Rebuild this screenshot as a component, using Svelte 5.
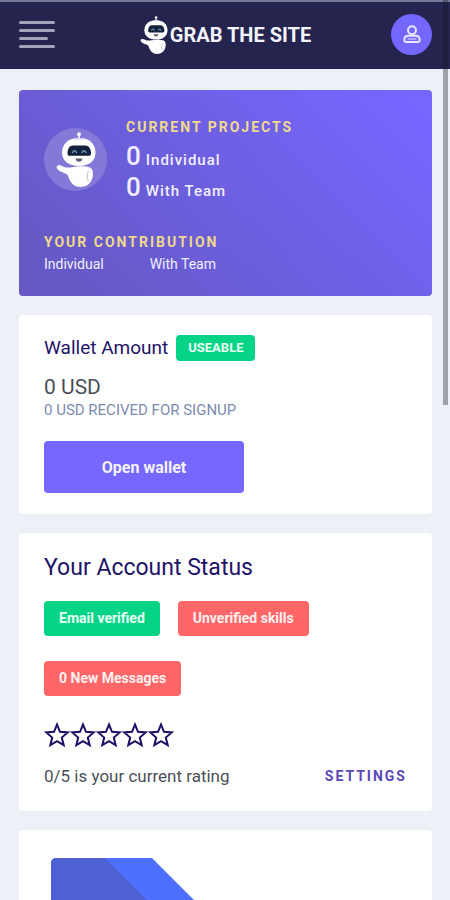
<script lang="ts">
  const projects = [
    { count: 0, label: 'Individual' },
    { count: 0, label: 'With Team' },
  ];

  const contributions = ['Individual', 'With Team'];

  const statuses = [
    { text: 'Email verified', ok: true },
    { text: 'Unverified skills', ok: false },
    { text: '0 New Messages', ok: false },
  ];

  const maxRating = 5;
  let rating = $state(0);
</script>

<svelte:head>
  <title>Grab The Site</title>
</svelte:head>

{#snippet robot()}
  <svg class="robot" viewBox="0 0 40 55" aria-hidden="true">
    <path d="M23 2v7" stroke="#fff" stroke-width="1.6" />
    <circle cx="23" cy="2.2" r="1.9" fill="#fff" />
    <path d="M23 6c10.500 0 16.500 6 16.500 14.500S33 34 23 34 6 29 6 20.500 12.500 6 23 6z" fill="#fff" />
    <path d="M18 8h10l-1.500-2h-7z" fill="#dcdcf2" />
    <path d="M17 13.500h12c4 0 6 3.500 6 8 0 1.600-.8 2.300-2.200 2.300H13.600c-1.400 0-2.100-.7-2.100-2.300 0-4.500 1.900-8 5.500-8z" fill="#15203a" />
    <path d="M16.500 20.500q2-3.500 4 0M26 20.500q2-3.500 4 0" fill="none" stroke="#6f9aba" stroke-width="1.500" stroke-linecap="round" />
    <path d="M19.500 26.500h7q-.8 3.200-3.500 3.200t-3.500-3.200z" fill="#595b68" />
    <path d="M1 34c1.500-1.500 4-.6 6 .4 3 1.500 6 1.300 9 .8 6-1.200 14-1.200 18 .4 3 1.500 3.400 5.400 2.600 9.400C35.400 51 31 55 24.500 55S14.500 51 12.500 45c-.5-2-1.500-2.800-3.500-3.600C5.500 40-1 37.500 1 34z" fill="#fff" />
    <path d="M32.500 39c-1.800 2.500-1.800 8 0 10.500" fill="none" stroke="#c9c9d6" stroke-width="1.200" />
  </svg>
{/snippet}

<div class="page">
  <header class="topbar">
    <button class="menu" aria-label="Open menu">
      <span></span>
      <span></span>
      <span class="short"></span>
      <span></span>
    </button>
    <a class="brand" href="/">
      {@render robot()}
      <span>GRAB THE SITE</span>
    </a>
    <a class="avatar" href="/profile" aria-label="Profile">
      <svg viewBox="0 0 20 20" width="20" height="20" fill="none" stroke="currentColor" stroke-width="2">
        <circle cx="10" cy="5.200" r="4" />
        <path d="M6.500 10.800h7c2.600 0 4.200 1.600 4.200 3.900 0 1.300-.8 2.200-2.200 2.200h-11c-1.400 0-2.200-.9-2.200-2.200 0-2.300 1.600-3.900 4.200-3.900z" />
        <path d="M5.500 14h9" stroke-width="1" />
      </svg>
    </a>
  </header>

  <main class="content">
    <section class="card card--projects">
      <div class="projects">
        <div class="bot">{@render robot()}</div>
        <div>
          <h2 class="eyebrow">CURRENT PROJECTS</h2>
          <ul class="counts">
            {#each projects as project}
              <li><strong>{project.count}</strong> {project.label}</li>
            {/each}
          </ul>
        </div>
      </div>
      <h2 class="eyebrow">YOUR CONTRIBUTION</h2>
      <div class="contributions">
        {#each contributions as item}
          <span>{item}</span>
        {/each}
      </div>
    </section>

    <section class="card card--wallet">
      <div class="wallet-head">
        <h2 class="wallet-title">Wallet Amount</h2>
        <span class="badge">USEABLE</span>
      </div>
      <p class="amount">0 USD</p>
      <p class="note">0 USD RECIVED FOR SIGNUP</p>
      <button class="btn">Open wallet</button>
    </section>

    <section class="card card--status">
      <h2 class="status-title">Your Account Status</h2>
      <div class="pills">
        {#each statuses as status}
          <span class="pill" class:pill--ok={status.ok}>{status.text}</span>
        {/each}
      </div>
      <div class="stars" role="img" aria-label="{rating} of {maxRating} stars">
        {#each { length: maxRating } as _, i}
          <svg viewBox="0 0 26 26" class:filled={i < rating}>
            <path d="M13 2.500l3 7.300 7.800.6-6 5.100 1.900 7.700L13 19.100l-6.700 4.100 1.900-7.700-6-5.100 7.800-.6z" />
          </svg>
        {/each}
      </div>
      <div class="status-foot">
        <span>{rating}/{maxRating} is your current rating</span>
        <a href="/settings">SETTINGS</a>
      </div>
    </section>

    <section class="card card--promo">
      <svg viewBox="0 0 220 140" width="220" height="140" aria-hidden="true">
        <path d="M5 0h96l119 119v21H0V5a5 5 0 0 1 5-5z" fill="#4d70ff" />
        <path d="M5 0h49l140 140H0V5a5 5 0 0 1 5-5z" fill="#4e61d3" />
      </svg>
    </section>
  </main>

  <div class="scroll-thumb"></div>
</div>

<style>
  :global(body) {
    background: #edf1f7;
  }

  .page {
    position: relative;
    height: 100vh;
    overflow: hidden;
    font-family: Roboto, "Liberation Sans", sans-serif;
    background: #edf1f7;
    color: #4b4f58;
  }

  h2, p, ul {
    margin: 0;
    padding: 0;
    font-weight: 400;
  }

  a { text-decoration: none; }

  button {
    border: none;
    font-family: inherit;
    cursor: pointer;
  }

  /* top bar */
  .topbar {
    display: grid;
    grid-template-columns: 1fr auto 1fr;
    align-items: center;
    height: 65px;
    padding: 0 18px 2px 19px;
    border-top: 2px solid #737b98;
    background: #24244f;
  }

  .menu {
    display: flex;
    flex-direction: column;
    gap: 5px;
    width: 36px;
    padding: 0;
    background: none;
  }

  .menu span {
    height: 3px;
    border-radius: 2px;
    background: #a2a2bb;
  }

  .menu .short { width: 29px; }

  .brand {
    display: flex;
    align-items: center;
    gap: 2px;
    font-size: 20px;
    font-weight: 700;
    color: #f3f3fb;
  }

  .brand .robot { width: 28px; height: 38px; }

  .avatar {
    display: flex;
    align-items: center;
    justify-content: center;
    justify-self: end;
    width: 41px;
    height: 41px;
    border-radius: 50%;
    background: #7367ff;
    color: #e9e7ff;
  }

  /* cards */
  .content {
    display: flex;
    flex-direction: column;
    gap: 19px;
    padding: 21px 18px 0 19px;
  }

  .card {
    padding: 20px 25px 21px;
    border-radius: 4px;
    background: #fff;
  }

  .card--projects {
    padding: 25px 25px 22px;
    background: linear-gradient(45deg, #6458c2 5%, #7567ff 95%);
    color: #f1efff;
  }

  .projects {
    display: flex;
    align-items: center;
    gap: 19px;
    margin-bottom: 27px;
  }

  .bot {
    display: flex;
    align-items: center;
    justify-content: center;
    width: 63px;
    height: 63px;
    border-radius: 50%;
    background: #8479d8;
  }

  .bot .robot { width: 40px; height: 55px; }

  .eyebrow {
    font-size: 14px;
    font-weight: 700;
    line-height: 24px;
    letter-spacing: 2px;
    color: #f0d98c;
  }

  .counts {
    margin-top: 2px;
    list-style: none;
    font-size: 15px;
    font-weight: 500;
    line-height: 31px;
    letter-spacing: 1px;
  }

  .counts li {
    display: flex;
    align-items: baseline;
    gap: 5px;
    height: 31px;
  }

  .counts strong {
    font-size: 26px;
    font-weight: 500;
    letter-spacing: 0;
  }

  .contributions {
    display: flex;
    gap: 46px;
    font-size: 14px;
    line-height: 20px;
  }

  /* wallet */
  .wallet-head {
    display: flex;
    align-items: center;
    gap: 8px;
    margin-bottom: 13px;
  }

  .wallet-title {
    font-size: 19px;
    line-height: 24px;
    color: #1f1367;
  }

  .badge {
    padding: 0 12px;
    border-radius: 4px;
    background: #05d487;
    color: #e8fff5;
    font-size: 13px;
    font-weight: 700;
    line-height: 26px;
  }

  .amount {
    font-size: 21px;
    line-height: 26px;
  }

  .note {
    font-size: 15px;
    line-height: 20px;
    color: #7d8bb0;
  }

  .btn {
    display: block;
    width: 200px;
    height: 52px;
    margin-top: 21px;
    border-radius: 4px;
    background: #7567ff;
    color: #f4f2ff;
    font-size: 16px;
    font-weight: 700;
  }

  /* account status */
  .status-title {
    margin-bottom: 18px;
    font-size: 23px;
    line-height: 30px;
    color: #1f1367;
  }

  .pills {
    display: flex;
    flex-wrap: wrap;
    gap: 25px 18px;
  }

  .pill {
    padding: 0 15px;
    border-radius: 4px;
    background: #ff6668;
    color: #fff0f0;
    font-size: 14px;
    font-weight: 700;
    line-height: 35px;
  }

  .pill--ok {
    background: #05d487;
    color: #e8fff5;
  }

  .stars {
    display: flex;
    margin: 26px 0 16px;
  }

  .stars svg {
    width: 26px;
    height: 26px;
    fill: none;
    stroke: #1f1367;
    stroke-width: 2;
  }

  .stars .filled { fill: #1f1367; }

  .status-foot {
    display: flex;
    align-items: center;
    justify-content: space-between;
    padding-bottom: 2px;
    font-size: 17px;
    line-height: 24px;
  }

  .status-foot a {
    font-size: 14px;
    font-weight: 700;
    letter-spacing: 2px;
    color: #5a48b8;
  }

  .card--promo { padding: 28px 32px; }

  /* scroll position indicator over the page edge */
  .scroll-thumb {
    position: absolute;
    top: 0;
    right: 2px;
    width: 5px;
    height: 45%;
    background: rgba(20, 22, 32, 0.36);
  }
</style>
